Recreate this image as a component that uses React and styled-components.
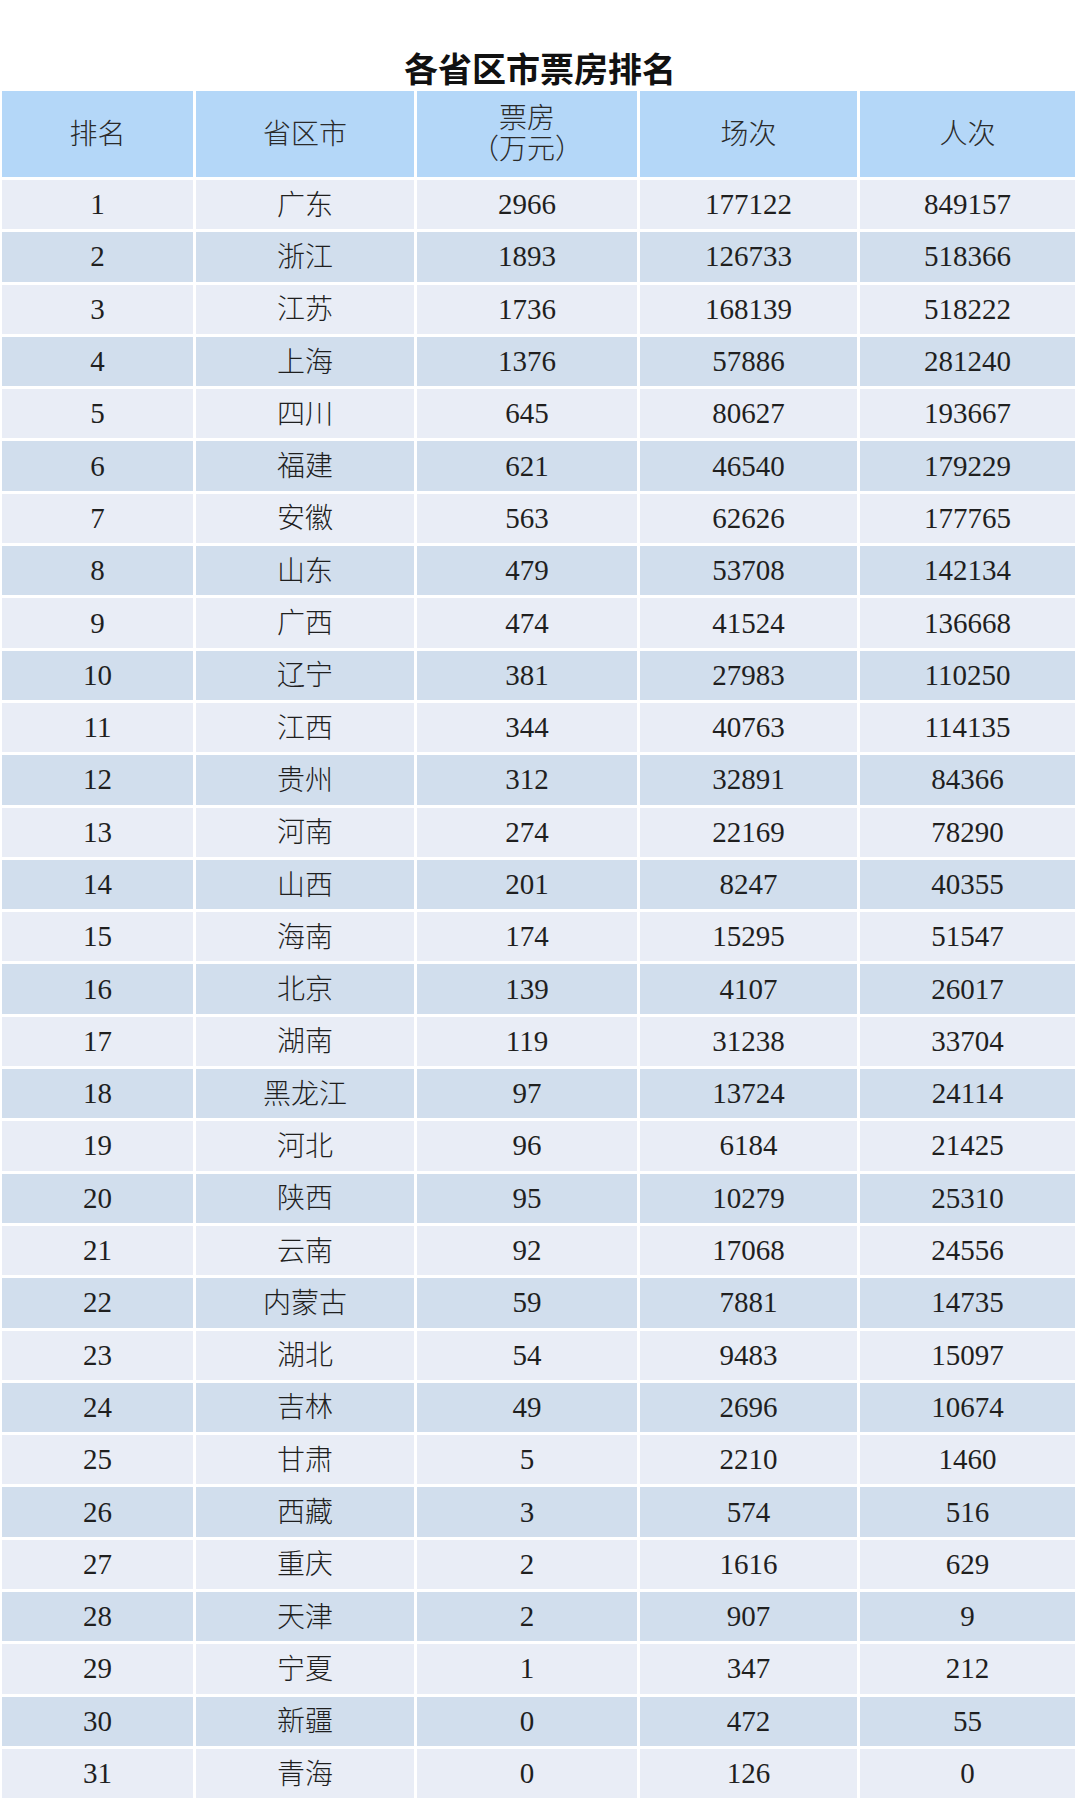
import React from "react";
import styled, { createGlobalStyle } from "styled-components";

const GlobalStyle = createGlobalStyle`
  html, body {
    margin: 0;
    padding: 0;
    background: #ffffff;
  }
  body {
    font-family: "Liberation Serif", "Noto Sans CJK SC", serif;
    color: #222;
  }
`;

const rows = [
  ["1", "广东", "2966", "177122", "849157"],
  ["2", "浙江", "1893", "126733", "518366"],
  ["3", "江苏", "1736", "168139", "518222"],
  ["4", "上海", "1376", "57886", "281240"],
  ["5", "四川", "645", "80627", "193667"],
  ["6", "福建", "621", "46540", "179229"],
  ["7", "安徽", "563", "62626", "177765"],
  ["8", "山东", "479", "53708", "142134"],
  ["9", "广西", "474", "41524", "136668"],
  ["10", "辽宁", "381", "27983", "110250"],
  ["11", "江西", "344", "40763", "114135"],
  ["12", "贵州", "312", "32891", "84366"],
  ["13", "河南", "274", "22169", "78290"],
  ["14", "山西", "201", "8247", "40355"],
  ["15", "海南", "174", "15295", "51547"],
  ["16", "北京", "139", "4107", "26017"],
  ["17", "湖南", "119", "31238", "33704"],
  ["18", "黑龙江", "97", "13724", "24114"],
  ["19", "河北", "96", "6184", "21425"],
  ["20", "陕西", "95", "10279", "25310"],
  ["21", "云南", "92", "17068", "24556"],
  ["22", "内蒙古", "59", "7881", "14735"],
  ["23", "湖北", "54", "9483", "15097"],
  ["24", "吉林", "49", "2696", "10674"],
  ["25", "甘肃", "5", "2210", "1460"],
  ["26", "西藏", "3", "574", "516"],
  ["27", "重庆", "2", "1616", "629"],
  ["28", "天津", "2", "907", "9"],
  ["29", "宁夏", "1", "347", "212"],
  ["30", "新疆", "0", "472", "55"],
  ["31", "青海", "0", "126", "0"],
];

const Page = styled.div`
  width: 1080px;
  padding-top: 48px;
`;

const Title = styled.h1`
  margin: 0 0 3px;
  height: 40px;
  line-height: 40px;
  text-align: center;
  font-family: "Noto Sans CJK SC", sans-serif;
  font-weight: 700;
  font-size: 34px;
  color: #111;
`;

const Grid = styled.div`
  display: grid;
  grid-template-columns: 191px 218px 220px 217px 215px;
  column-gap: 3px;
  row-gap: 3px;
  margin-left: 2px;
`;

const HeadCell = styled.div`
  height: 86px;
  box-sizing: border-box;
  padding-bottom: 4px;
  background: #b4d7f8;
  display: flex;
  flex-direction: column;
  align-items: center;
  justify-content: center;
  font-family: "Noto Sans CJK SC", sans-serif;
  font-weight: 300;
  font-size: 28px;
  line-height: 32px;
  color: #2a2a2a;
`;

const HeadLine = styled.div`
  height: 31px;
  line-height: 31px;
  overflow: visible;
`;

const Cell = styled.div`
  height: 49.3px;
  box-sizing: border-box;
  padding-bottom: ${(p) => (p.$cjk ? "4px" : "0")};
  background: ${(p) => (p.$even ? "#d1deed" : "#e9edf6")};
  display: flex;
  align-items: center;
  justify-content: center;
  font-family: ${(p) =>
    p.$cjk ? '"Noto Sans CJK SC", sans-serif' : '"Liberation Serif", serif'};
  font-weight: ${(p) => (p.$cjk ? 300 : 400)};
  font-size: ${(p) => (p.$cjk ? "28px" : "29px")};
  line-height: 1;
  color: #1f1f1f;
`;

export default function App() {
  return (
    <Page>
      <GlobalStyle />
      <Title>各省区市票房排名</Title>
      <Grid>
        <HeadCell>排名</HeadCell>
        <HeadCell>省区市</HeadCell>
        <HeadCell>
          <HeadLine>票房</HeadLine>
          <HeadLine>（万元）</HeadLine>
        </HeadCell>
        <HeadCell>场次</HeadCell>
        <HeadCell>人次</HeadCell>
        {rows.map((r, i) =>
          r.map((v, j) => (
            <Cell key={i + "-" + j} $even={i % 2 === 1} $cjk={j === 1}>
              {v}
            </Cell>
          ))
        )}
      </Grid>
    </Page>
  );
}
